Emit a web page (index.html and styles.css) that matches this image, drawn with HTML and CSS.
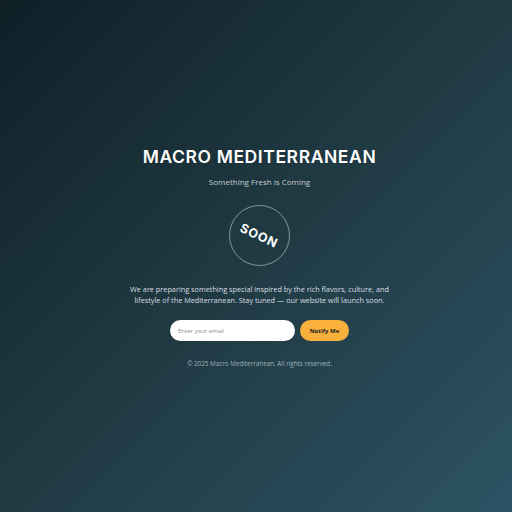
FILE: index.html
```html
<!DOCTYPE html>
<html>
<head>
<meta charset="utf-8">
<link rel="stylesheet" href="styles.css">
</head>
<body>
<main class="page">
  <h1 class="title">MACRO MEDITERRANEAN</h1>
  <p class="subtitle">Something Fresh is Coming</p>
  <div class="badge"><span class="badge-text">SOON</span></div>
  <p class="desc">We are preparing something special inspired by the rich flavors, culture, and lifestyle of the Mediterranean. Stay tuned — our website will launch soon.</p>
  <form class="notify">
    <input class="email" type="email" placeholder="Enter your email">
    <button class="btn" type="button">Notify Me</button>
  </form>
  <p class="footer">© 2025 Macro Mediterranean. All rights reserved.</p>
</main>
</body>
</html>
```
FILE: styles.css
```css
html, body {
  margin: 0;
  height: 100%;
}
body {
  background: linear-gradient(135deg, #0f2027 0%, #203a43 50%, #2c5364 100%);
  font-family: "Open Sans", "Liberation Sans", sans-serif;
  color: #fff;
}
.page {
  height: 100%;
  display: flex;
  flex-direction: column;
  align-items: center;
  justify-content: center;
  text-align: center;
  padding: 2px 0 0 7px;
  box-sizing: border-box;
}
.title {
  margin: 0;
  font-size: 17.5px;
  font-weight: 600;
  letter-spacing: 0.6px;
  line-height: 22px;
  font-family: "Inter", "Open Sans", sans-serif;
}
.subtitle {
  margin: 9px 0 0;
  font-size: 8px;
  line-height: 10px;
  color: #c4ccd0;
}
.badge {
  margin-top: 18px;
  width: 59px;
  height: 59px;
  border: 1px solid rgba(255,255,255,0.45);
  border-radius: 50%;
  display: flex;
  align-items: center;
  justify-content: center;
}
.badge-text {
  display: inline-block;
  transform: rotate(25deg);
  font-weight: 700;
  font-size: 12.5px;
  letter-spacing: 0.8px;
  font-family: "Inter", sans-serif;
}
.desc {
  margin: 18px 0 0;
  max-width: 264px;
  font-size: 7.3px;
  line-height: 11px;
  color: #d8dee1;
}
.notify {
  margin-top: 14px;
  display: flex;
  gap: 5px;
}
.email {
  width: 125px;
  height: 21px;
  box-sizing: border-box;
  border: none;
  border-radius: 11px;
  background: #fff;
  padding: 0 8px;
  font-size: 6px;
  font-family: inherit;
  outline: none;
}
.email::placeholder {
  color: #8a8a8a;
}
.btn {
  width: 49px;
  height: 21px;
  border: none;
  border-radius: 11px;
  background: #f9b13c;
  color: #222;
  font-weight: 700;
  font-size: 6px;
  font-family: inherit;
  padding: 0;
}
.footer {
  margin: 18px 0 0;
  font-size: 6.3px;
  color: #9fb0b8;
}
```
